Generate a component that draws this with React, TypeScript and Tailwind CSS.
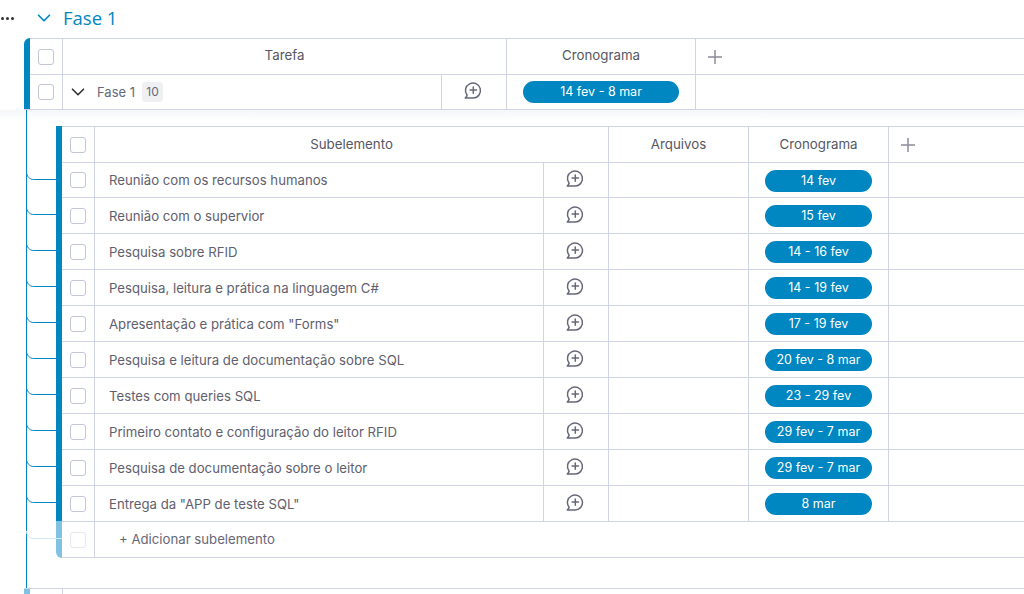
import { ChevronDown } from 'lucide-react';

const rows = [
    { name: 'Reunião com os recursos humanos', date: '14 fev', first: true },
    { name: 'Reunião com o supervior', date: '15 fev' },
    { name: 'Pesquisa sobre RFID', date: '14 - 16 fev' },
    { name: 'Pesquisa, leitura e prática na linguagem C#', date: '14 - 19 fev' },
    { name: 'Apresentação e prática com "Forms"', date: '17 - 19 fev' },
    { name: 'Pesquisa e leitura de documentação sobre SQL', date: '20 fev - 8 mar' },
    { name: 'Testes com queries SQL', date: '23 - 29 fev' },
    { name: 'Primeiro contato e configuração do leitor RFID', date: '29 fev - 7 mar' },
    { name: 'Pesquisa de documentação sobre o leitor', date: '29 fev - 7 mar' },
    { name: 'Entrega da "APP de teste SQL"', date: '8 mar' },
];

const Checkbox = ({ faded }: { faded?: boolean }) => (
    <div className={`w-4 h-4 rounded-[3px] border ${faded ? 'border-[#e6e8f0]' : 'border-[#c3c6d4]'}`} />
);

const CommentIcon = () => (
    <svg className="mb-1 mr-[2px]" width="20" height="20" viewBox="0 0 20 20" fill="none" stroke="#676879" strokeWidth="1.5" strokeLinecap="round" strokeLinejoin="round">
        <path d="M4.1 15.2A7.5 7.5 0 1 1 10.3 18H2.2c.9-.7 1.6-1.6 1.9-2.8Z" />
        <path d="M10.3 6.9v6.4M7.1 10.1h6.4" />
    </svg>
);

const Plus = () => (
    <svg width="16" height="16" viewBox="0 0 16 16" stroke="#8b8c99" strokeWidth="1.5">
        <path d="M8 1v14M1 8h14" />
    </svg>
);

const Pill = ({ label, width }: { label: string; width: string }) => (
    <div className={`${width} h-[22px] pt-px rounded-full bg-[#0086c0] text-white text-[12.5px] flex items-center justify-center`}>
        {label}
    </div>
);

const Connector = ({ light }: { light?: boolean }) => (
    <svg className="absolute left-[-36px] top-0" width="36" height="20" fill="none" stroke={light ? '#cfe8f2' : '#0086c0'} strokeWidth="1">
        <path d="M0.5 9c0 4 3 7.5 7 7.5H36" />
    </svg>
);

const App = () => {
    return (
        <div className="w-[1024px] h-[594px] overflow-hidden bg-white text-[#323338] font-['Inter','Liberation_Sans',sans-serif] text-[13.3px]">
            {/* Group title */}
            <div className="h-[38px] flex items-center">
                <div className="w-[33px] flex gap-[2px] pl-[1px] pb-[2px]">
                    <span className="w-[3px] h-[3px] rounded-full bg-[#323338]" />
                    <span className="w-[3px] h-[3px] rounded-full bg-[#323338]" />
                    <span className="w-[3px] h-[3px] rounded-full bg-[#323338]" />
                </div>
                <ChevronDown size={22} strokeWidth={1.8} className="text-[#0086c0] mb-[2px]" />
                <h1 className="ml-[8px] mb-[2px] text-[18.5px] leading-6 font-medium text-[#0086c0] font-['Open_Sans',sans-serif]">Fase 1</h1>
            </div>

            {/* Main table */}
            <div className="ml-6 flex border-b border-[#d0d4e4]">
                <div className="w-[6px] bg-[#0086c0] rounded-tl-[6px]" />
                <div className="flex-1">
                    <div className="h-9 flex border-t border-[#d0d4e4]">
                        <div className="w-[33px] flex items-center justify-center border-r border-[#d0d4e4]">
                            <Checkbox />
                        </div>
                        <div className="w-[444px] flex items-center justify-center border-r border-[#d0d4e4] text-[#555763] pb-[1px]">Tarefa</div>
                        <div className="w-[189px] flex items-center justify-center border-r border-[#d0d4e4] text-[#555763] pb-[1px]">Cronograma</div>
                        <div className="pl-[11px] flex items-center"><Plus /></div>
                    </div>
                    <div className="h-[35px] flex border-t border-[#d0d4e4]">
                        <div className="w-[33px] flex items-center justify-center border-r border-[#d0d4e4]">
                            <Checkbox />
                        </div>
                        <div className="w-[379px] flex items-center border-r border-[#d0d4e4] pl-[4px]">
                            <ChevronDown size={22} strokeWidth={1.8} className="text-[#323338]" />
                            <span className="ml-[8px] pt-px text-[#676879] text-[13px]">Fase 1</span>
                            <span className="ml-[7px] w-[21px] h-[20px] rounded-[4px] bg-[#f0f0f3] text-[#676879] text-[12px] flex items-center justify-center">10</span>
                        </div>
                        <div className="w-[65px] flex items-center justify-center border-r border-[#d0d4e4]"><CommentIcon /></div>
                        <div className="w-[189px] flex items-center justify-center border-r border-[#d0d4e4]">
                            <Pill label="14 fev - 8 mar" width="w-[156px]" />
                        </div>
                    </div>
                </div>
            </div>

            {/* Subitems */}
            <div className="relative h-[478px] pt-[16px] pl-[56px] bg-linear-to-b from-[#f5f6f8] to-white to-[12px]">
                <div className="absolute left-[26px] top-0 bottom-0 w-px bg-[#0086c0]" />
                <div className="flex">
                    <div className="w-[6px] flex flex-col">
                        <div className="h-[395px] bg-[#0086c0]" />
                        <div className="flex-1 bg-[#80c2df] rounded-bl-[6px]" />
                    </div>
                    <div className="flex-1 border-b border-[#d0d4e4] bg-white">
                        <div className="h-9 flex border-t border-[#d0d4e4]">
                            <div className="w-[33px] flex items-center justify-center border-r border-[#d0d4e4]">
                                <Checkbox />
                            </div>
                            <div className="w-[514px] flex items-center justify-center border-r border-[#d0d4e4] text-[#555763]">Subelemento</div>
                            <div className="w-[140px] flex items-center justify-center border-r border-[#d0d4e4] text-[#555763]">Arquivos</div>
                            <div className="w-[140px] flex items-center justify-center border-r border-[#d0d4e4] text-[#555763]">Cronograma</div>
                            <div className="pl-[11px] flex items-center"><Plus /></div>
                        </div>
                        {rows.map(row => (
                            <div key={row.name} className={`${row.first ? 'h-[35px]' : 'h-9'} relative flex border-t border-[#d0d4e4]`}>
                                <Connector />
                                <div className="w-[33px] flex items-center justify-center border-r border-[#d0d4e4]">
                                    <Checkbox />
                                </div>
                                <div className={`w-[449px] flex items-center border-r border-[#d0d4e4] pl-[14px] ${row.first ? 'pt-px' : 'pt-[2px]'} text-[#5f606e] text-[13.2px]`}>{row.name}</div>
                                <div className="w-[65px] flex items-center justify-center border-r border-[#d0d4e4]"><CommentIcon /></div>
                                <div className="w-[140px] border-r border-[#d0d4e4]" />
                                <div className={`w-[140px] flex items-center justify-center border-r border-[#d0d4e4] ${row.first ? 'pt-px' : ''}`}>
                                    <Pill label={row.date} width="w-[107px]" />
                                </div>
                            </div>
                        ))}
                        <div className="h-9 relative flex border-t border-[#d0d4e4]">
                            <Connector light />
                            <div className="w-[33px] flex items-center justify-center border-r border-[#d0d4e4]">
                                <Checkbox faded />
                            </div>
                            <div className="flex items-center pl-[24px] text-[#676879] text-[13.2px]">+ Adicionar subelemento</div>
                        </div>
                    </div>
                </div>
                <div className="mt-[30px] -ml-[32px] flex border-t border-[#d0d4e4] h-4">
                    <div className="w-[6px] bg-[#80c2df]" />
                    <div className="w-[33px] border-r border-[#d0d4e4]" />
                </div>
            </div>
        </div>
    );
};

export default App;
